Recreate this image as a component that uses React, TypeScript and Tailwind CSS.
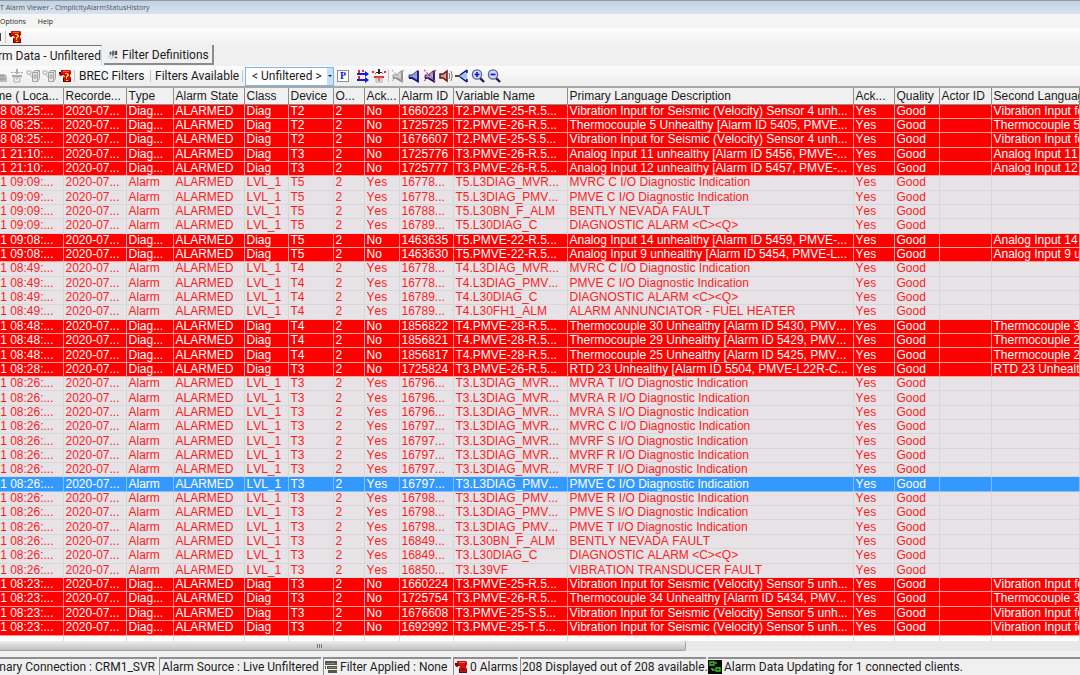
import React from "react";

type Kind = "diag" | "lvl" | "sel";
type Row = { kind: Kind; time: string; dev: string; id: string; name: string; text: string; second?: string };

const d = (time: string, dev: string, id: string, name: string, text: string, second: string): Row => ({ kind: "diag", time, dev, id, name, text, second });
const l = (time: string, dev: string, id: string, name: string, text: string, kind: Kind = "lvl"): Row => ({ kind, time, dev, id, name, text });

const rows: Row[] = [
  d("28 08:25:...", "T2", "1660223", "T2.PMVE-25-R.5...", "Vibration Input for Seismic (Velocity) Sensor 4 unh...", "Vibration Input for"),
  d("28 08:25:...", "T2", "1725725", "T2.PMVE-26-R.5...", "Thermocouple 5 Unhealthy [Alarm ID 5405, PMVE...", "Thermocouple 5"),
  d("28 08:25:...", "T2", "1676607", "T2.PMVE-25-S.5...", "Vibration Input for Seismic (Velocity) Sensor 4 unh...", "Vibration Input for"),
  d("31 21:10:...", "T3", "1725776", "T3.PMVE-26-R.5...", "Analog Input 11 unhealthy [Alarm ID 5456, PMVE-...", "Analog Input 11"),
  d("31 21:10:...", "T3", "1725777", "T3.PMVE-26-R.5...", "Analog Input 12 unhealthy [Alarm ID 5457, PMVE-...", "Analog Input 12"),
  l("31 09:09:...", "T5", "16778...", "T5.L3DIAG_MVR...", "MVRC C I/O Diagnostic Indication"),
  l("31 09:09:...", "T5", "16778...", "T5.L3DIAG_PMV...", "PMVE C I/O Diagnostic Indication"),
  l("31 09:09:...", "T5", "16788...", "T5.L30BN_F_ALM", "BENTLY NEVADA FAULT"),
  l("31 09:09:...", "T5", "16789...", "T5.L30DIAG_C", "DIAGNOSTIC ALARM <C><Q>"),
  d("31 09:08:...", "T5", "1463635", "T5.PMVE-22-R.5...", "Analog Input 14 unhealthy [Alarm ID 5459, PMVE-...", "Analog Input 14"),
  d("31 09:08:...", "T5", "1463630", "T5.PMVE-22-R.5...", "Analog Input 9 unhealthy [Alarm ID 5454, PMVE-L...", "Analog Input 9 u"),
  l("31 08:49:...", "T4", "16778...", "T4.L3DIAG_MVR...", "MVRC C I/O Diagnostic Indication"),
  l("31 08:49:...", "T4", "16778...", "T4.L3DIAG_PMV...", "PMVE C I/O Diagnostic Indication"),
  l("31 08:49:...", "T4", "16789...", "T4.L30DIAG_C", "DIAGNOSTIC ALARM <C><Q>"),
  l("31 08:49:...", "T4", "16789...", "T4.L30FH1_ALM", "ALARM ANNUNCIATOR - FUEL HEATER"),
  d("31 08:48:...", "T4", "1856822", "T4.PMVE-28-R.5...", "Thermocouple 30 Unhealthy [Alarm ID 5430, PMV...", "Thermocouple 3"),
  d("31 08:48:...", "T4", "1856821", "T4.PMVE-28-R.5...", "Thermocouple 29 Unhealthy [Alarm ID 5429, PMV...", "Thermocouple 2"),
  d("31 08:48:...", "T4", "1856817", "T4.PMVE-28-R.5...", "Thermocouple 25 Unhealthy [Alarm ID 5425, PMV...", "Thermocouple 2"),
  d("31 08:28:...", "T3", "1725824", "T3.PMVE-26-R.5...", "RTD 23 Unhealthy [Alarm ID 5504, PMVE-L22R-C...", "RTD 23 Unhealthy"),
  l("31 08:26:...", "T3", "16796...", "T3.L3DIAG_MVR...", "MVRA T I/O Diagnostic Indication"),
  l("31 08:26:...", "T3", "16796...", "T3.L3DIAG_MVR...", "MVRA R I/O Diagnostic Indication"),
  l("31 08:26:...", "T3", "16796...", "T3.L3DIAG_MVR...", "MVRA S I/O Diagnostic Indication"),
  l("31 08:26:...", "T3", "16797...", "T3.L3DIAG_MVR...", "MVRC C I/O Diagnostic Indication"),
  l("31 08:26:...", "T3", "16797...", "T3.L3DIAG_MVR...", "MVRF S I/O Diagnostic Indication"),
  l("31 08:26:...", "T3", "16797...", "T3.L3DIAG_MVR...", "MVRF R I/O Diagnostic Indication"),
  l("31 08:26:...", "T3", "16797...", "T3.L3DIAG_MVR...", "MVRF T I/O Diagnostic Indication"),
  l("31 08:26:...", "T3", "16797...", "T3.L3DIAG_PMV...", "PMVE C I/O Diagnostic Indication", "sel"),
  l("31 08:26:...", "T3", "16798...", "T3.L3DIAG_PMV...", "PMVE R I/O Diagnostic Indication"),
  l("31 08:26:...", "T3", "16798...", "T3.L3DIAG_PMV...", "PMVE S I/O Diagnostic Indication"),
  l("31 08:26:...", "T3", "16798...", "T3.L3DIAG_PMV...", "PMVE T I/O Diagnostic Indication"),
  l("31 08:26:...", "T3", "16849...", "T3.L30BN_F_ALM", "BENTLY NEVADA FAULT"),
  l("31 08:26:...", "T3", "16849...", "T3.L30DIAG_C", "DIAGNOSTIC ALARM <C><Q>"),
  l("31 08:26:...", "T3", "16850...", "T3.L39VF", "VIBRATION TRANSDUCER FAULT"),
  d("31 08:23:...", "T3", "1660224", "T3.PMVE-25-R.5...", "Vibration Input for Seismic (Velocity) Sensor 5 unh...", "Vibration Input for"),
  d("31 08:23:...", "T3", "1725754", "T3.PMVE-26-R.5...", "Thermocouple 34 Unhealthy [Alarm ID 5434, PMV...", "Thermocouple 3"),
  d("31 08:23:...", "T3", "1676608", "T3.PMVE-25-S.5...", "Vibration Input for Seismic (Velocity) Sensor 5 unh...", "Vibration Input for"),
  d("31 08:23:...", "T3", "1692992", "T3.PMVE-25-T.5...", "Vibration Input for Seismic (Velocity) Sensor 5 unh...", "Vibration Input for"),
];

const columns: [string, string][] = [
  ["Recorde...", "w-[63px]"],
  ["Type", "w-[47px]"],
  ["Alarm State", "w-[71px]"],
  ["Class", "w-[44px]"],
  ["Device", "w-[45px]"],
  ["O...", "w-[31px]"],
  ["Ack...", "w-[35px]"],
  ["Alarm ID", "w-[54px]"],
  ["Variable Name", "w-[114px]"],
  ["Primary Language Description", "w-[286px]"],
  ["Ack...", "w-[41px]"],
  ["Quality", "w-[45px]"],
  ["Actor ID", "w-[52px]"],
  ["Second Language", ""],
];

const rowStyle: Record<Kind, string> = {
  diag: "bg-[#fe0000] text-white",
  lvl: "bg-[#e6e2e6] text-[#fd1c20]",
  sel: "bg-[#3399ff] text-white",
};
const cellStyle: Record<Kind, string> = {
  diag: "border-[#ff9c9c]",
  lvl: "border-[#d9d6da]",
  sel: "border-[#84c0fb]",
};

const Icon = ({ children }: { children: React.ReactNode }) => (
  <svg viewBox="0 0 14 14" className="size-[14px] shrink-0" aria-hidden="true">{children}</svg>
);

const Phone = ({ badge = false }: { badge?: boolean }) => (
  <Icon>
    <path d="M3 1h9l1 1v3l-1 1v1l1 2v4H5V9l1-3H4v1H2L1 5V3h2z" fill="#d80f0f" />
    <path d="M1 3h2v2H1zM3 5h2v1H3zM5 9h1v4H5z" fill="#3a0505" />
    <path d="M11 3h1v3h-1zM12 9h1v4h-1zM6 12h7v1H6z" fill="#7d0000" />
    <path d="M5 2h6v1H5z" fill="#ff5a3a" />
    {badge && <path d="M7 4h3v1h1v2h-1v1H9v2H8V7h1V5H7zM8 11h2v1H8zM6 7h1v1H6z" fill="#ffd800" />}
    {!badge && <path d="M7 8h4v3H7z" fill="#a00808" />}
  </Icon>
);

const Horn = ({ edge, fill, mark }: { edge: string; fill: string; mark?: string }) => (
  <Icon>
    <path d="M2 6h3l6-4v10L5 9H2z" fill={fill} />
    <path d="M2 9h3l6 3.500V1.500" fill="none" stroke={edge} strokeWidth="1.800" />
    <path d="M2 9V6h3l5-4" fill="none" stroke={edge} strokeWidth="0.800" />
    {mark && <path d="M1 1l12 12M13 1L1 12" stroke={mark} strokeWidth="1.300" strokeDasharray="2 1.500" />}
  </Icon>
);

const Magnifier = ({ plus = false }: { plus?: boolean }) => (
  <Icon>
    <path d="M9 9l4 4" stroke="#1b1b52" strokeWidth="2.400" />
    <circle cx="6" cy="5.500" r="4.600" fill="#cfdcff" stroke="#5b628c" strokeWidth="1.300" />
    <path d={plus ? "M3.500 5.500h5M6 3v5" : "M3.500 5.500h5"} stroke="#1010e8" strokeWidth="1.700" />
  </Icon>
);

const Server = () => (
  <Icon>
    <path d="M1 2h4v3H1zM3 5l3 3" fill="none" stroke="#b0b0b0" />
    <path d="M6.500 3.500l2-2h5v8l-2 3h-5z" fill="#e4e4e4" stroke="#a4a4a4" />
    <path d="M6.500 3.500h5v9M11.500 3.500l2-2M8 6h2v3H8z" fill="none" stroke="#a4a4a4" />
  </Icon>
);

const IconButton = ({ label, children }: { label: string; children: React.ReactNode }) => (
  <button type="button" aria-label={label} className="flex shrink-0 items-center">{children}</button>
);

const Divider = () => <span className="h-3 w-px shrink-0 bg-[#c4c4c4]" />;

const Status = ({ children, className }: { children: React.ReactNode; className: string }) => (
  <div className={`flex h-[18px] shrink-0 items-center gap-[2px] border-t-2 border-[#8f8f8f] ${className}`}>{children}</div>
);

export default function App() {
  return (
    <div className="flex h-screen min-h-[660px] flex-col overflow-hidden bg-[#f0f0f0] font-[Roboto,sans-serif] text-[12px] leading-[14px] whitespace-nowrap text-[#1c1c1c]">
      <header className="flex h-[14px] shrink-0 items-center border-t border-[#8f9ba8] bg-linear-to-b from-[#c3d1e0] to-[#d8e3ef] font-['Open_Sans',sans-serif] text-[7px] text-[#4a5560]">
        T Alarm Viewer - CimplicityAlarmStatusHistory
      </header>
      <nav className="flex h-[14px] shrink-0 items-center gap-3 bg-[#f5f5f5] pt-[2px] font-['Open_Sans',sans-serif] text-[7px]">
        <button type="button">Options</button>
        <button type="button">Help</button>
      </nav>
      <div className="flex h-[17px] shrink-0 items-center bg-linear-to-b from-[#fdfdfd] to-[#f1f1f1]">
        <span className="mr-1 h-2 w-px bg-[#444]" />
        <Divider />
        <span className="w-[2px]" />
        <IconButton label="Alarms"><Phone badge /></IconButton>
      </div>
      <div role="tablist" className="flex h-[21px] shrink-0 items-stretch gap-[2px]">
        <button type="button" role="tab" aria-selected="true" className="flex w-[102px] items-center justify-end border-t border-r border-t-[#777] border-r-[#ddd] bg-[#f6f6f6]">
          rm Data - Unfiltered
        </button>
        <button type="button" role="tab" aria-selected="false" className="mb-px flex items-center gap-[4px] border-r-2 border-b-2 border-[#8c8c8c] pt-px pr-[3px] pl-[4px]">
          <svg viewBox="0 0 12 12" className="size-[10px]" aria-hidden="true">
            <path d="M2 2h2v4H2zM5 1h2v6H5zM8 1h3v5H8zM8 8h3v2H8z" fill="#4c4c4c" />
            <path d="M1 9l4-7M4 11l5-9" stroke="#9a9a9a" />
          </svg>
          Filter Definitions
        </button>
      </div>
      <div className="flex h-[20px] shrink-0 items-center bg-linear-to-b from-[#fcfcfc] to-[#ededed]">
        <div className="flex w-[74px] shrink-0 items-center justify-end gap-[2px] overflow-hidden pr-[2px]">
          <IconButton label="Print">
            <Icon>
              <path d="M2 5h9l2 3v5H2z" fill="#b8b8b8" />
              <path d="M4 7h6M4 10h7" stroke="#8f8f8f" />
            </Icon>
          </IconButton>
          <IconButton label="Network">
            <Icon>
              <path d="M6 0h2v3h2v1H8v1H6V4H4V3h2zM1 3h2v1H1zM11 3h2v1h-2zM2 6h10v2H2z" fill="#acacac" />
              <path d="M4 8h6v5H4z" fill="#eee" stroke="#b0b0b0" />
              <path d="M7 8v3" stroke="#b0b0b0" />
            </Icon>
          </IconButton>
          <IconButton label="Server"><Server /></IconButton>
          <IconButton label="Export server"><Server /></IconButton>
          <IconButton label="Alarm help"><Phone badge /></IconButton>
        </div>
        <Divider />
        <button type="button" className="w-[75px] pl-1 text-left">BREC Filters</button>
        <Divider />
        <label htmlFor="filter" className="w-[91px] pl-1">Filters Available</label>
        <Divider />
        <div className="ml-[2px] flex h-[19px] w-[89px] shrink-0 items-stretch border border-[#7eb4ea] bg-white">
          <select id="filter" className="min-w-0 flex-1 appearance-none bg-transparent pl-[6px]">
            <option>&lt; Unfiltered &gt;</option>
          </select>
          <span className="flex w-[6px] items-center justify-center bg-[#c4dffb]">
            <svg viewBox="0 0 4 2" className="h-[2px] w-1" aria-hidden="true"><path d="M0 0h4L2 2z" fill="#222" /></svg>
          </span>
        </div>
        <button type="button" className="mx-[3px] flex size-[12px] shrink-0 items-center justify-center border border-[#8a8fa0] bg-white font-['Liberation_Serif',serif] text-[10px] font-bold text-[#1414e0]">P</button>
        <div className="flex items-center gap-[2px] pl-[4px]">
          <IconButton label="Transfer">
            <Icon>
              <path d="M1 4h8V2l4 3-4 3V6H1zM1 10h8V8l4 3-4 3v-2H1z" fill="#1717e8" />
              <path d="M2 1h2v3H2zM6 1h2v2H6zM2 7h2v3H2z" fill="#f02828" />
            </Icon>
          </IconButton>
          <IconButton label="Connections">
            <Icon>
              <path d="M6 0h2v3h2v1H8v1H6V4H4V3h2z" fill="#2a2a2a" />
              <path d="M0 2h2v2H0zM12 2h2v2h-2zM3 4h1v1H3zM10 4h1v1h-1zM2 7h10v2H2z" fill="#f02828" />
              <path d="M4 9h6v4H4z" fill="#eee" stroke="#aaa" />
              <path d="M6 9h2v3H6z" fill="#f06060" />
            </Icon>
          </IconButton>
          <Divider />
          <IconButton label="Horn disabled"><Horn edge="#8c8c8c" fill="#d8d8d8" mark="#b4b4b4" /></IconButton>
          <IconButton label="Horn"><Horn edge="#10108c" fill="#8fa3c0" /></IconButton>
          <IconButton label="Silence horn"><Horn edge="#10108c" fill="#a3afc8" mark="#f04040" /></IconButton>
          <IconButton label="Sound horn">
            <Icon>
              <path d="M1 5h3l4-3v10L4 9H1z" fill="#c9a0a0" stroke="#701010" strokeWidth="1.500" />
              <path d="M10 4q1.500 3 0 6M12 2q2.500 5 0 10" fill="none" stroke="#777" />
            </Icon>
          </IconButton>
          <IconButton label="Horn setup">
            <Icon>
              <path d="M0 7h6" stroke="#222" strokeWidth="1.600" />
              <path d="M5 6l7-5v12L5 8z" fill="#a8c2ee" />
              <path d="M5 6l7-5M5 8l7 5M12 1v3M12 10v3" stroke="#10107a" strokeWidth="1.500" />
            </Icon>
          </IconButton>
          <IconButton label="Zoom in"><Magnifier plus /></IconButton>
          <IconButton label="Zoom out"><Magnifier /></IconButton>
        </div>
      </div>
      <main className="flex min-h-0 flex-1 flex-col overflow-hidden border-t-2 border-[#a5a8a5] bg-white font-['Liberation_Sans',Arial,sans-serif] [font-kerning:none]">
        <table className="h-full w-full table-fixed border-collapse text-left">
          <thead>
            <tr className="h-4 bg-[#f0f0f0]">
              <th className="w-[63px] overflow-hidden border-r border-b border-[#8d8d8d] p-0 font-normal">
                <div className="flex items-center justify-end pt-px pr-1">
                  me ( Loca...
                  <svg viewBox="0 0 4 4" className="size-1" aria-hidden="true"><path d="M0 4l2-4 2 4" fill="none" stroke="#aaa" strokeWidth="0.800" /></svg>
                </div>
              </th>
              {columns.map(([name, width], i) => (
                <th key={i} className={`overflow-hidden border-r border-b border-[#8d8d8d] p-0 pt-px pl-[2px] font-normal ${width}`}>{name}</th>
              ))}
            </tr>
          </thead>
          <tbody>
            {rows.map((r, i) => {
              const diag = r.kind === "diag";
              const cells = ["2020-07...", diag ? "Diag..." : "Alarm", "ALARMED", diag ? "Diag" : "LVL_1", r.dev, "2", diag ? "No" : "Yes", r.id, r.name, r.text, "Yes", "Good", "", r.second ?? ""];
              return (
                <tr key={i} className={rowStyle[r.kind]}>
                  <td className={`overflow-hidden border-r border-b p-0 leading-[13px] ${cellStyle[r.kind]}`}>
                    <div className="flex justify-end pr-[9px]">{r.time}</div>
                  </td>
                  {cells.map((c, j) => (
                    <td key={j} className={`overflow-hidden border-r border-b p-0 pl-[2px] leading-[13px] ${cellStyle[r.kind]}`}>{c}</td>
                  ))}
                </tr>
              );
            })}
            <tr className="h-[6px]" aria-hidden="true">
              <td className="border-r border-[#dedede] p-0" />
              {columns.map((_, i) => (
                <td key={i} className="border-r border-[#dedede] p-0" />
              ))}
            </tr>
          </tbody>
        </table>
      </main>
      <div className="flex h-[10px] shrink-0 bg-[#e9e9e9]" role="scrollbar" aria-orientation="horizontal" aria-valuenow={0} aria-controls="root">
        <div className="flex w-[63.5%] items-center rounded-r-xs border-r border-b border-[#a2a2a2] bg-linear-to-b from-[#eeeeee] to-[#bdbfc1]">
          <span className="ml-[317px] flex gap-px">
            <span className="h-1 w-px bg-[#777]" />
            <span className="h-1 w-px bg-[#777]" />
            <span className="h-1 w-px bg-[#777]" />
          </span>
        </div>
      </div>
      <footer className="flex shrink-0 gap-[2px] pt-[6px]">
        <Status className="w-[157px] justify-end overflow-hidden pr-[2px]">nary Connection : CRM1_SVR</Status>
        <Status className="w-[162px] border-l pl-[2px]">Alarm Source : Live Unfiltered</Status>
        <Status className="w-[128px] border-l">
          <Icon>
            <path d="M1 1h12v4H1zM3 6h10v3H3zM1 6h1v3H1zM4 10h9v3H4z" fill="#55564a" />
            <path d="M2 3h9v1H2zM4 7h8v1H4z" fill="#85867a" />
          </Icon>
          Filter Applied : None
        </Status>
        <Status className="w-[65px] border-l">
          <Phone />
          0 Alarms
        </Status>
        <Status className="w-[186px] border-l pl-px">208 Displayed out of 208 available.</Status>
        <Status className="min-w-0 flex-1">
          <Icon>
            <path d="M0 0h14v14H0z" fill="#050805" />
            <path d="M2 2h4v3H2zM8 8h4v3H8z" fill="none" stroke="#35c818" strokeWidth="1.300" />
            <path d="M4 8v2h3M7 3h2" fill="none" stroke="#9be08a" />
          </Icon>
          Alarm Data Updating for 1 connected clients.
        </Status>
      </footer>
    </div>
  );
}
